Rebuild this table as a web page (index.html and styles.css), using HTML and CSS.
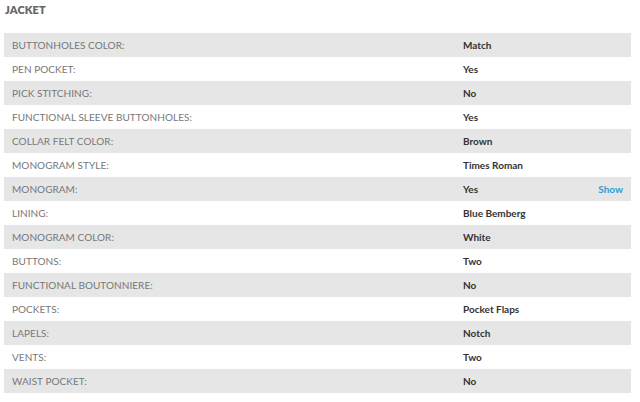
FILE: index.html
```html
<!DOCTYPE html>
<html>
<head>
<meta charset="utf-8">
<link rel="stylesheet" href="styles.css">
</head>
<body>
<section class="spec">
  <h2 class="spec-title">JACKET</h2>
  <div class="spec-table">
    <div class="row odd"><span class="label">BUTTONHOLES COLOR:</span><span class="value">Match</span></div>
    <div class="row"><span class="label">PEN POCKET:</span><span class="value">Yes</span></div>
    <div class="row odd"><span class="label">PICK STITCHING:</span><span class="value">No</span></div>
    <div class="row"><span class="label">FUNCTIONAL SLEEVE BUTTONHOLES:</span><span class="value">Yes</span></div>
    <div class="row odd"><span class="label">COLLAR FELT COLOR:</span><span class="value">Brown</span></div>
    <div class="row"><span class="label">MONOGRAM STYLE:</span><span class="value">Times Roman</span></div>
    <div class="row odd"><span class="label">MONOGRAM:</span><span class="value">Yes</span><a class="show">Show</a></div>
    <div class="row"><span class="label">LINING:</span><span class="value">Blue Bemberg</span></div>
    <div class="row odd"><span class="label">MONOGRAM COLOR:</span><span class="value">White</span></div>
    <div class="row"><span class="label">BUTTONS:</span><span class="value">Two</span></div>
    <div class="row odd"><span class="label">FUNCTIONAL BOUTONNIERE:</span><span class="value">No</span></div>
    <div class="row"><span class="label">POCKETS:</span><span class="value">Pocket Flaps</span></div>
    <div class="row odd"><span class="label">LAPELS:</span><span class="value">Notch</span></div>
    <div class="row"><span class="label">VENTS:</span><span class="value">Two</span></div>
    <div class="row odd"><span class="label">WAIST POCKET:</span><span class="value">No</span></div>
  </div>
</section>
</body>
</html>
```
FILE: styles.css
```css
html, body {
  margin: 0;
  padding: 0;
  background: #fff;
}
body {
  font-family: "Lato", "Liberation Sans", sans-serif;
}
.spec {
  padding: 0 9px 0 4px;
}
.spec-title {
  margin: 0;
  padding: 3px 0 0 1px;
  height: 33px;
  box-sizing: border-box;
  font-size: 11px;
  font-weight: 800;
  color: #666;
  letter-spacing: 0.1px;
}
.spec-table {
  display: flex;
  flex-direction: column;
}
.row {
  display: flex;
  align-items: center;
  height: 24px;
  padding: 0 8px 0 8px;
  background: #fff;
}
.row.odd {
  background: #e6e6e6;
}
.label {
  width: 451px;
  font-size: 10px;
  color: #777;
  letter-spacing: 0.05px;
}
.value {
  flex: 1;
  font-size: 10px;
  font-weight: 700;
  color: #333;
}
.show {
  font-size: 10px;
  font-weight: 700;
  color: #2a9fd6;
}
```
